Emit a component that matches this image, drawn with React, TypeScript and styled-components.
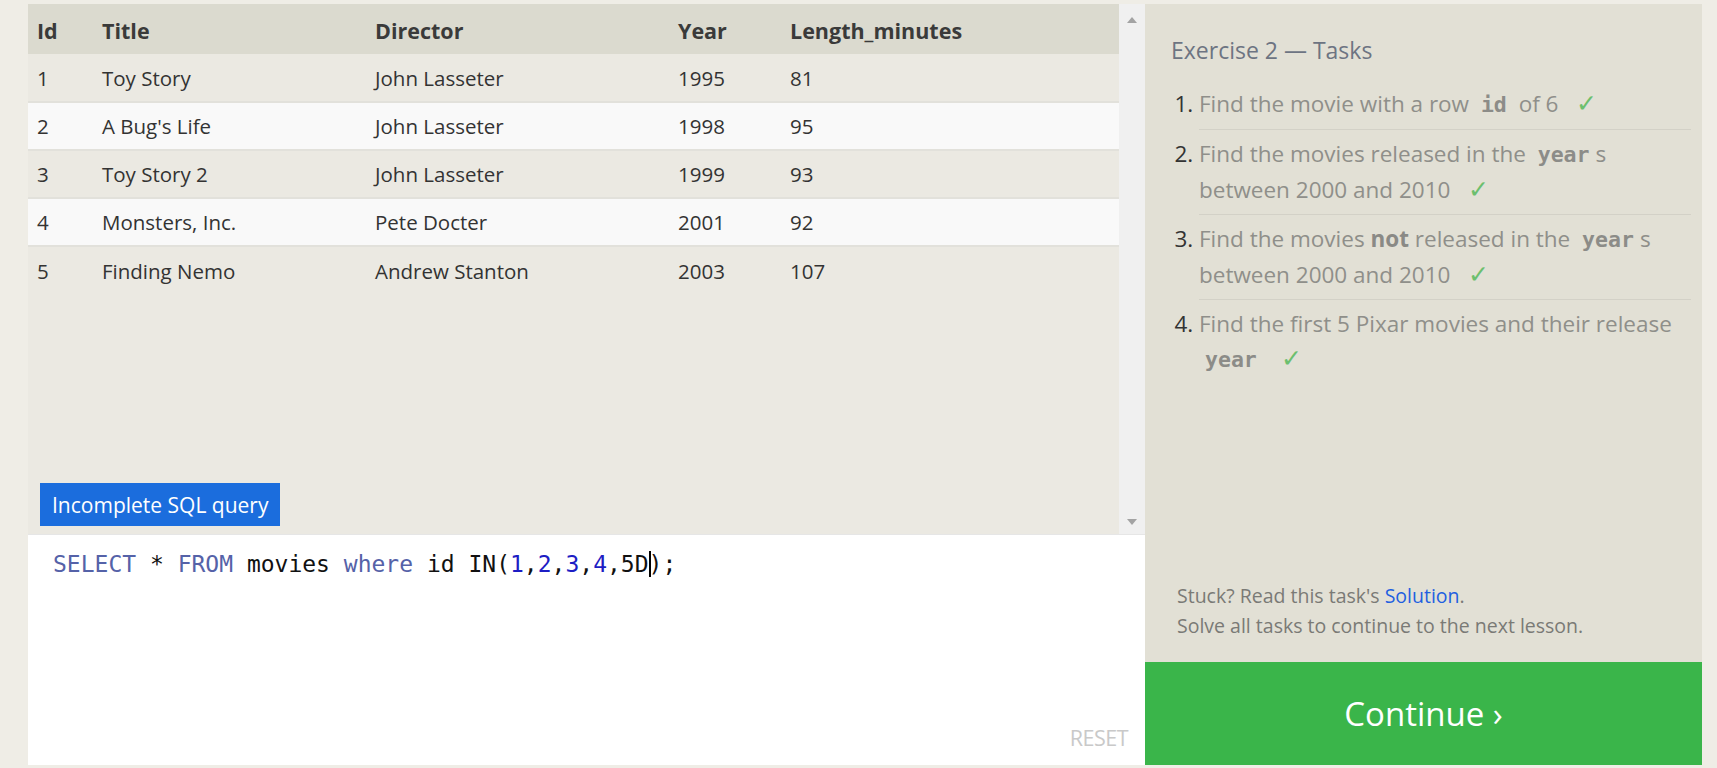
import React from "react";
import styled, { createGlobalStyle } from "styled-components";

const GlobalStyle = createGlobalStyle`
  html, body { margin: 0; padding: 0; }
  body {
    background: #efede6;
    font-family: "Open Sans", "Noto Sans", sans-serif;
    color: #333;
  }
  * { box-sizing: border-box; }
`;

const Page = styled.div`
  display: flex;
  height: 768px;
  padding: 4px 15px 3px 28px;
`;

const LeftPanel = styled.div`
  width: 1117px;
  display: flex;
  flex-direction: column;
`;

const Results = styled.div`
  height: 530px;
  display: flex;
  background: #ebe9e2;
  position: relative;
`;

const TableArea = styled.div`
  flex: 1;
  position: relative;
`;

const Table = styled.table`
  width: 100%;
  border-collapse: collapse;
  font-size: 20.5px;
  color: #333;
`;

const Th = styled.th<{ $w?: number }>`
  text-align: left;
  font-weight: 700;
  font-size: 21.5px;
  height: 50px;
  padding: 2px 9px 0;
  background: #dbdacf;
  color: #3a3a3a;
  width: ${(p) => (p.$w ? `${p.$w}px` : "auto")};
`;

const Tr = styled.tr<{ $alt?: boolean }>`
  background: ${(p) => (p.$alt ? "#f9f9f9" : "#ebe9e2")};
  border-top: 2px solid #e2e1db;
  &:first-child { border-top: none; }
`;

const Td = styled.td`
  height: 48px;
  padding: 0 9px;
  font-weight: 400;
`;

const ErrorBadge = styled.div`
  position: absolute;
  left: 12px;
  bottom: 8px;
  height: 43px;
  padding: 0 12px;
  display: flex;
  align-items: center;
  background: #1b6ddd;
  color: #fff;
  font-size: 21px;
`;

const Scrollbar = styled.div`
  width: 26px;
  background: #f0f0f0;
  display: flex;
  flex-direction: column;
  justify-content: space-between;
  align-items: center;
  padding: 13px 0 9px;
`;

const Arrow = styled.div<{ $down?: boolean }>`
  width: 0;
  height: 0;
  border-left: 5px solid transparent;
  border-right: 5px solid transparent;
  ${(p) =>
    p.$down
      ? "border-top: 6px solid #a3a3a3;"
      : "border-bottom: 6px solid #a3a3a3;"}
`;

const Editor = styled.div`
  flex: 1;
  background: #fff;
  position: relative;
  padding: 14px 25px;
  border-top: 1px solid #e6e6e6;
`;

const CodeLine = styled.div`
  font-family: "DejaVu Sans Mono", "Liberation Mono", monospace;
  font-size: 23px;
  line-height: 30px;
  color: #111;
  white-space: pre;
`;

const Kw = styled.span`
  color: #5562a8;
`;

const Num = styled.span`
  color: #1d1dc4;
`;

const Cursor = styled.span`
  display: inline-block;
  width: 2px;
  height: 26px;
  background: #000;
  vertical-align: -5px;
  margin-right: -2px;
`;

const ResetBtn = styled.div`
  position: absolute;
  right: 17px;
  bottom: 13px;
  font-size: 21.5px;
  color: #c9c9c9;
  letter-spacing: -0.5px;
`;

const RightPanel = styled.div`
  width: 557px;
  background: #e2e0d5;
  display: flex;
  flex-direction: column;
`;

const TaskContent = styled.div`
  flex: 1;
  padding: 33px 11px 0 26px;
  display: flex;
  flex-direction: column;
`;

const Title = styled.div`
  font-size: 23px;
  line-height: 26px;
  color: #6d7482;
  margin-bottom: 17px;
`;

const TaskList = styled.ol`
  margin: 0;
  padding: 0 0 0 28px;
`;

const TaskItem = styled.li<{ $last?: boolean }>`
  font-size: 22.5px;
  line-height: 35px;
  padding: 6px 0 7px;
  color: #8f8f8a;
  border-bottom: ${(p) => (p.$last ? "none" : "1px solid #d3d1c7")};
  &::marker {
    color: #333;
  }
`;

const Code = styled.code`
  font-family: "DejaVu Sans Mono", "Liberation Mono", monospace;
  font-weight: 700;
  font-size: 21.5px;
  color: #8c8c88;
  padding: 0 6px;
`;

const Strong = styled.strong`
  color: #8a8a86;
`;

const Check = styled.span`
  color: #6cbf6e;
  font-size: 25px;
  font-family: "DejaVu Sans", sans-serif;
  font-weight: 300;
  margin-left: 18px;
`;

const Spacer = styled.div`
  flex: 1;
`;

const Note = styled.div`
  font-size: 19.5px;
  line-height: 30px;
  color: #7a7a76;
  padding-left: 6px;
  margin-bottom: 21px;
`;

const Link = styled.a`
  color: #1f5fe0;
  text-decoration: none;
`;

const ContinueBtn = styled.div`
  height: 103px;
  background: #3ab54a;
  color: #fff;
  font-size: 33px;
  display: flex;
  align-items: center;
  justify-content: center;
  cursor: pointer;
`;

const rows = [
  { id: 1, title: "Toy Story", director: "John Lasseter", year: 1995, len: 81 },
  { id: 2, title: "A Bug's Life", director: "John Lasseter", year: 1998, len: 95 },
  { id: 3, title: "Toy Story 2", director: "John Lasseter", year: 1999, len: 93 },
  { id: 4, title: "Monsters, Inc.", director: "Pete Docter", year: 2001, len: 92 },
  { id: 5, title: "Finding Nemo", director: "Andrew Stanton", year: 2003, len: 107 },
];

export default function App() {
  return (
    <>
      <GlobalStyle />
      <Page>
        <LeftPanel>
          <Results>
            <TableArea>
              <Table>
                <thead>
                  <tr>
                    <Th $w={65}>Id</Th>
                    <Th $w={273}>Title</Th>
                    <Th $w={303}>Director</Th>
                    <Th $w={112}>Year</Th>
                    <Th>Length_minutes</Th>
                  </tr>
                </thead>
                <tbody>
                  {rows.map((r, i) => (
                    <Tr key={r.id} $alt={i % 2 === 1}>
                      <Td>{r.id}</Td>
                      <Td>{r.title}</Td>
                      <Td>{r.director}</Td>
                      <Td>{r.year}</Td>
                      <Td>{r.len}</Td>
                    </Tr>
                  ))}
                </tbody>
              </Table>
              <ErrorBadge>Incomplete SQL query</ErrorBadge>
            </TableArea>
            <Scrollbar>
              <Arrow />
              <Arrow $down />
            </Scrollbar>
          </Results>
          <Editor>
            <CodeLine>
              <Kw>SELECT</Kw> * <Kw>FROM</Kw> movies <Kw>where</Kw> id IN(
              <Num>1</Num>,<Num>2</Num>,<Num>3</Num>,<Num>4</Num>,5D<Cursor />);
            </CodeLine>
            <ResetBtn>RESET</ResetBtn>
          </Editor>
        </LeftPanel>
        <RightPanel>
          <TaskContent>
            <Title>Exercise 2 — Tasks</Title>
            <TaskList>
              <TaskItem>
                Find the movie with a row <Code>id</Code> of 6<Check>✓</Check>
              </TaskItem>
              <TaskItem>
                Find the movies released in the <Code>year</Code>s between 2000 and 2010
                <Check>✓</Check>
              </TaskItem>
              <TaskItem>
                Find the movies <Strong>not</Strong> released in the <Code>year</Code>s
                between 2000 and 2010<Check>✓</Check>
              </TaskItem>
              <TaskItem $last>
                Find the first 5 Pixar movies and their release <Code>year</Code>
                <Check>✓</Check>
              </TaskItem>
            </TaskList>
            <Spacer />
            <Note>
              Stuck? Read this task's <Link href="#">Solution</Link>.
              <br />
              Solve all tasks to continue to the next lesson.
            </Note>
          </TaskContent>
          <ContinueBtn>Continue ›</ContinueBtn>
        </RightPanel>
      </Page>
    </>
  );
}
